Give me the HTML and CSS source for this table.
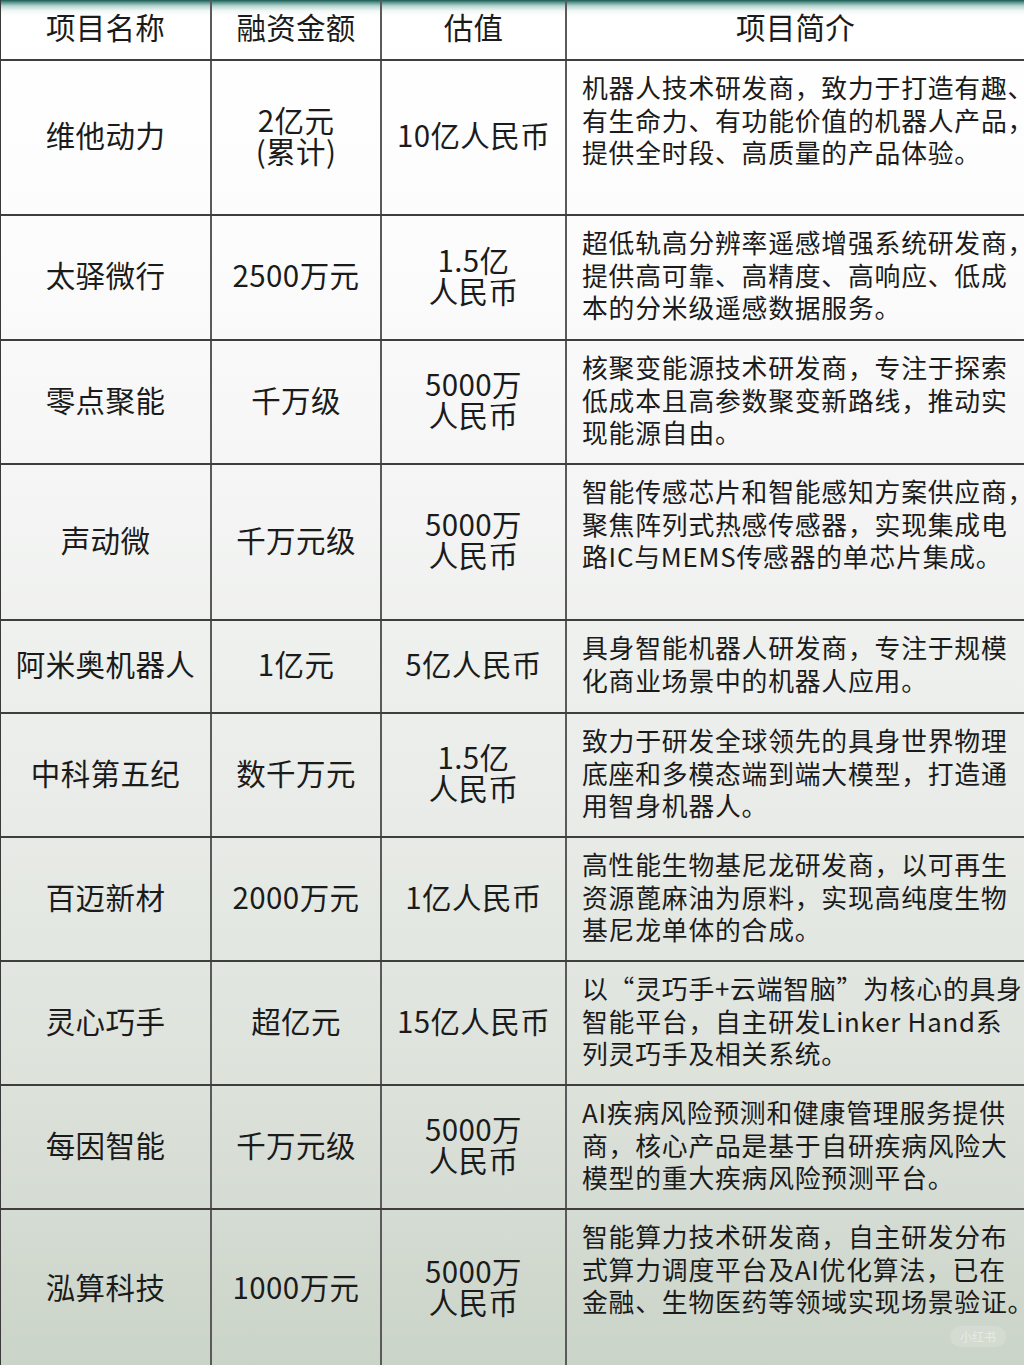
FILE: index.html
```html
<!DOCTYPE html>
<html lang="zh-CN">
<head>
<meta charset="utf-8">
<title>项目融资表</title>
<link rel="stylesheet" href="styles.css">
</head>
<body>
<div class="sheet">
  <div class="row head">
    <div class="cell">项目名称</div>
    <div class="cell">融资金额</div>
    <div class="cell">估值</div>
    <div class="cell">项目简介</div>
  </div>

  <div class="row h155">
    <div class="cell">维他动力</div>
    <div class="cell two"><span>2亿元</span><span>(累计)</span></div>
    <div class="cell">10亿人民币</div>
    <div class="cell desc">机器人技术研发商，致力于打造有趣、<br>有生命力、有功能价值的机器人产品，<br>提供全时段、高质量的产品体验。</div>
  </div>

  <div class="row h125">
    <div class="cell">太驿微行</div>
    <div class="cell">2500万元</div>
    <div class="cell two"><span>1.5亿</span><span>人民币</span></div>
    <div class="cell desc">超低轨高分辨率遥感增强系统研发商，<br>提供高可靠、高精度、高响应、低成<br>本的分米级遥感数据服务。</div>
  </div>

  <div class="row h124">
    <div class="cell">零点聚能</div>
    <div class="cell">千万级</div>
    <div class="cell two"><span>5000万</span><span>人民币</span></div>
    <div class="cell desc">核聚变能源技术研发商，专注于探索<br>低成本且高参数聚变新路线，推动实<br>现能源自由。</div>
  </div>

  <div class="row h156">
    <div class="cell">声动微</div>
    <div class="cell">千万元级</div>
    <div class="cell two"><span>5000万</span><span>人民币</span></div>
    <div class="cell desc">智能传感芯片和智能感知方案供应商，<br>聚焦阵列式热感传感器，实现集成电<br>路IC与MEMS传感器的单芯片集成。</div>
  </div>

  <div class="row h93">
    <div class="cell">阿米奥机器人</div>
    <div class="cell">1亿元</div>
    <div class="cell">5亿人民币</div>
    <div class="cell desc">具身智能机器人研发商，专注于规模<br>化商业场景中的机器人应用。</div>
  </div>

  <div class="row h124">
    <div class="cell">中科第五纪</div>
    <div class="cell">数千万元</div>
    <div class="cell two"><span>1.5亿</span><span>人民币</span></div>
    <div class="cell desc">致力于研发全球领先的具身世界物理<br>底座和多模态端到端大模型，打造通<br>用智身机器人。</div>
  </div>

  <div class="row h124">
    <div class="cell">百迈新材</div>
    <div class="cell">2000万元</div>
    <div class="cell">1亿人民币</div>
    <div class="cell desc">高性能生物基尼龙研发商，以可再生<br>资源蓖麻油为原料，实现高纯度生物<br>基尼龙单体的合成。</div>
  </div>

  <div class="row h124">
    <div class="cell">灵心巧手</div>
    <div class="cell">超亿元</div>
    <div class="cell">15亿人民币</div>
    <div class="cell desc">以“灵巧手+云端智脑”为核心的具身<br>智能平台，自主研发Linker Hand系<br>列灵巧手及相关系统。</div>
  </div>

  <div class="row h124">
    <div class="cell">每因智能</div>
    <div class="cell">千万元级</div>
    <div class="cell two"><span>5000万</span><span>人民币</span></div>
    <div class="cell desc">AI疾病风险预测和健康管理服务提供<br>商，核心产品是基于自研疾病风险大<br>模型的重大疾病风险预测平台。</div>
  </div>

  <div class="row h156 last">
    <div class="cell">泓算科技</div>
    <div class="cell">1000万元</div>
    <div class="cell two"><span>5000万</span><span>人民币</span></div>
    <div class="cell desc">智能算力技术研发商，自主研发分布<br>式算力调度平台及AI优化算法，已在<br>金融、生物医药等领域实现场景验证。</div>
  </div>
</div>
<div class="mark">小红书</div>
</body>
</html>
```

FILE: styles.css
```css
html {
  height: 1365px;
  overflow: hidden;
}

body {
  margin: 0;
  height: 1365px;
  overflow: hidden;
  position: relative;
  font-family: "Noto Sans CJK SC", "Noto Sans", sans-serif;
  color: #1b1b1b;
  background: linear-gradient(to bottom,
    #17584f 0px,
    #4f8c84 2px,
    #b9d6d1 6px,
    #f3f8f7 11px,
    #ffffff 16px,
    #fcfcfc 250px,
    #f3f4f3 520px,
    #e9ece8 800px,
    #dde2db 1080px,
    #cbd4c9 1365px);
}

.sheet {
  width: 1024px;
  border-left: 1px solid #3a3a3a;
  box-sizing: border-box;
}

.row {
  display: grid;
  grid-template-columns: 211px 170px 185px 1fr;
  border-bottom: 2px solid #3e3e3e;
  box-sizing: border-box;
}

.cell {
  display: flex;
  align-items: center;
  justify-content: center;
  text-align: center;
  font-size: 29.5px;
  line-height: 31px;
  letter-spacing: 0.4px;
  padding-bottom: 6px;
  border-right: 2px solid #5a5a5a;
  white-space: nowrap;
}

.cell:last-child {
  border-right: none;
}

.two {
  flex-direction: column;
}

.two span {
  display: block;
  height: 31px;
  line-height: 31px;
}

.head {
  height: 61px;
}

.head .cell {
  padding-bottom: 6px;
  letter-spacing: 0.3px;
}

.h155 { height: 155px; }
.h125 { height: 125px; }
.h124 { height: 124px; }
.h156 { height: 156px; }
.h93 { height: 93px; }
.last { height: 160px; }

.desc {
  display: block;
  text-align: left;
  font-size: 25.8px;
  line-height: 32.5px;
  letter-spacing: 0.8px;
  padding: 10px 0 0 15px;
  overflow: visible;
}

.mark {
  position: absolute;
  right: 18px;
  bottom: 18px;
  padding: 2px 10px;
  border-radius: 12px;
  background: rgba(255, 255, 255, 0.14);
  color: rgba(255, 255, 255, 0.45);
  font-size: 12px;
}
```
